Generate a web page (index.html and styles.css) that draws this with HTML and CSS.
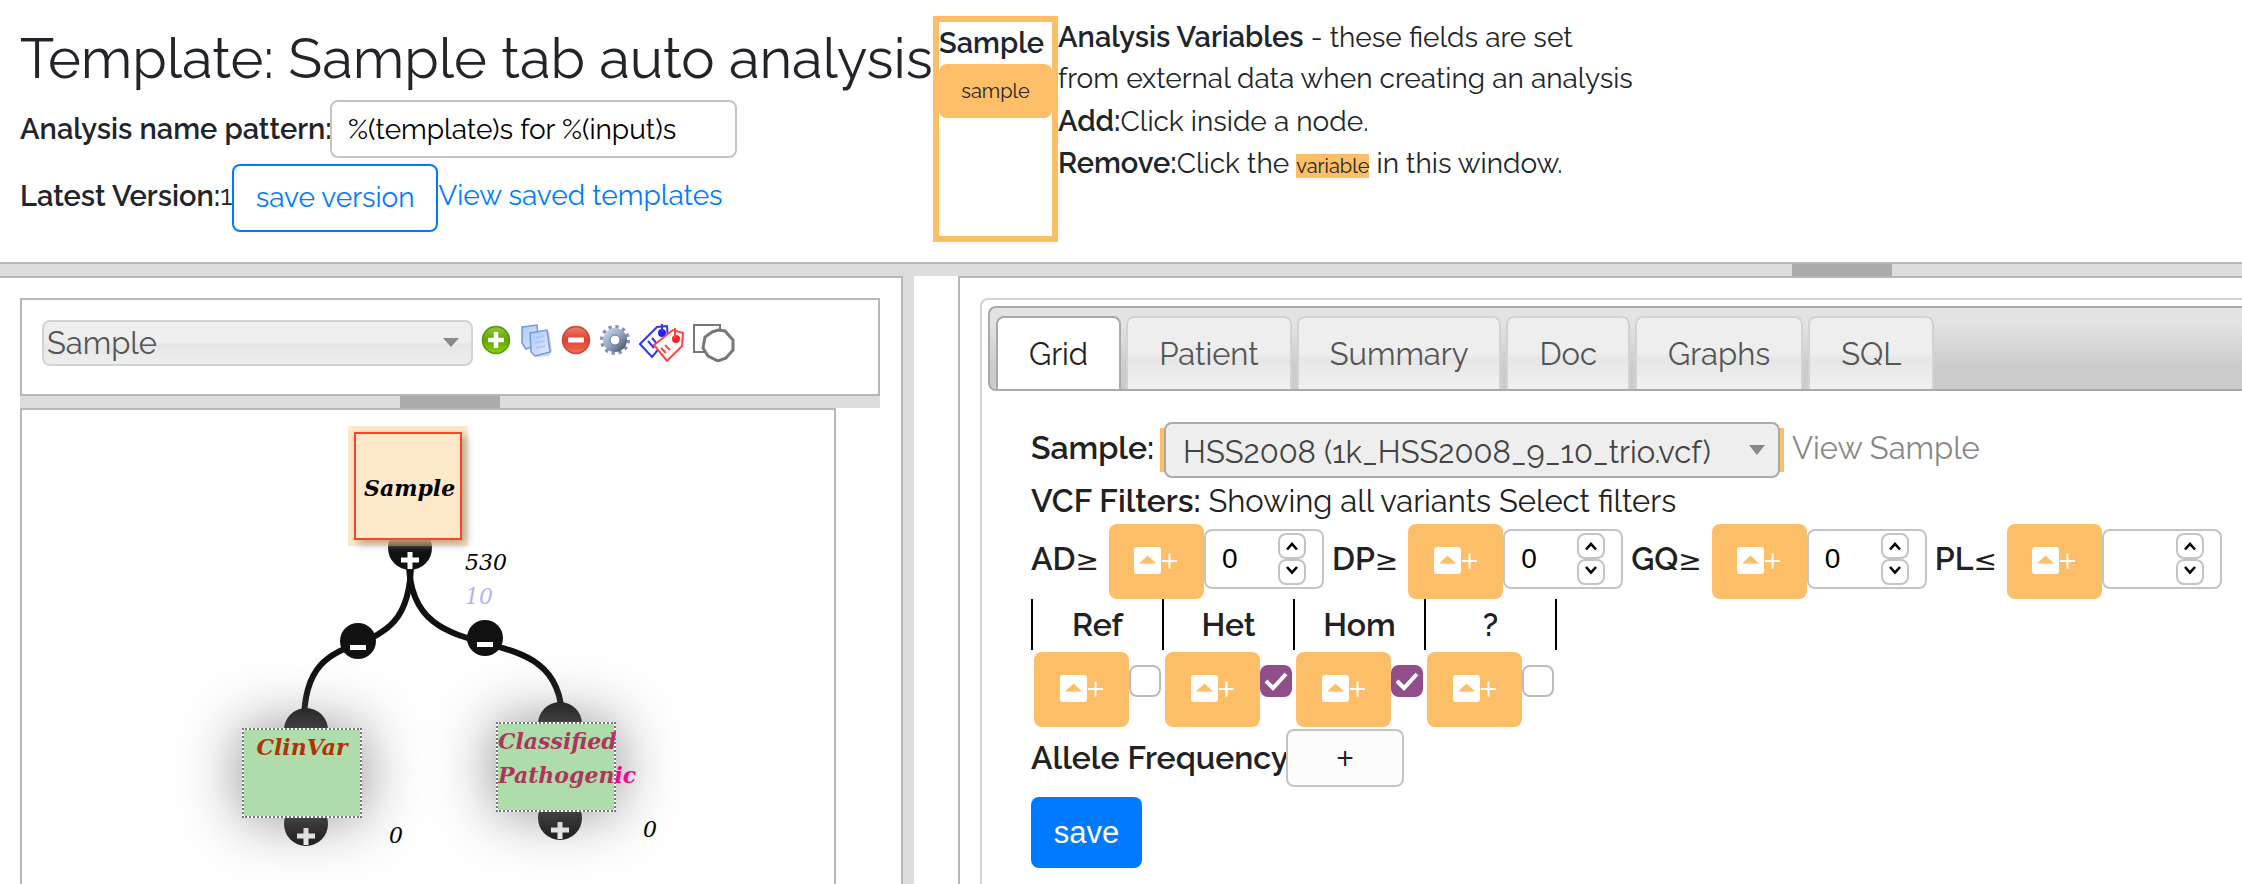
FILE: index.html
```html
<!DOCTYPE html>
<html lang="en">
<head>
<meta charset="utf-8">
<title>Template: Sample tab auto analysis</title>
<link rel="stylesheet" href="styles.css">
</head>
<body>
<svg class="defs" aria-hidden="true">
  <defs>
    <linearGradient id="green" x1="0" y1="0" x2="0" y2="1"><stop offset="0" stop-color="#8fc63a"/><stop offset=".5" stop-color="#5ea800"/><stop offset="1" stop-color="#8bd000"/></linearGradient>
    <linearGradient id="red" x1="0" y1="0" x2="0" y2="1"><stop offset="0" stop-color="#ee7a6a"/><stop offset=".5" stop-color="#e23f2d"/><stop offset="1" stop-color="#f4705c"/></linearGradient>
    <linearGradient id="steel" x1="0" y1="0" x2="1" y2="1"><stop offset="0" stop-color="#c4d0e2"/><stop offset=".5" stop-color="#93a5c0"/><stop offset="1" stop-color="#4f617c"/></linearGradient>
    <linearGradient id="page" x1="0" y1="0" x2="1" y2="1"><stop offset="0" stop-color="#a9c6f7"/><stop offset="1" stop-color="#e4eeff"/></linearGradient>
    <symbol id="insert" viewBox="0 0 44 28"><rect x="0" y="0" width="27" height="27" rx="3" fill="#fff"/><path d="M5 16.500l8.500-8 8.500 8z" fill="#fcbe67"/><path d="M28 14h15M35.500 6.500v15" stroke="#fff" stroke-width="2"/></symbol>
    <symbol id="up" viewBox="0 0 28 26"><path d="M9 16.500l5-5.500 5 5.500" fill="none" stroke="#000" stroke-width="2.600"/></symbol>
    <symbol id="down" viewBox="0 0 28 26"><path d="M9 8l5 5.500L19 8" fill="none" stroke="#000" stroke-width="2.600"/></symbol>
  </defs>
</svg>

<header class="top">
  <section class="template">
    <h1>Template: Sample tab auto analysis</h1>
    <div class="row name-row"><label for="pattern">Analysis name pattern:</label><input id="pattern" class="text-input" type="text" value="%(template)s for %(input)s"></div>
    <div class="row version-row"><strong>Latest Version:</strong><span class="version">1</span><button class="save-version" type="button">save version</button><a href="#">View saved templates</a></div>
  </section>
  <section class="variables">
    <strong>Sample</strong>
    <button class="variable-button" type="button">sample</button>
  </section>
  <section class="help">
    <div><strong>Analysis Variables</strong> - these fields are set</div>
    <div>from external data when creating an analysis</div>
    <div><strong>Add:</strong>Click inside a node.</div>
    <div><strong>Remove:</strong>Click the <span class="variable">variable</span> in this window.</div>
  </section>
</header>
<div class="splitter main-splitter"><span class="handle"></span></div>

<main class="work">
  <section class="left">
    <div class="toolbar">
      <select class="node-type" aria-label="Node type"><option>Sample</option></select>
      <button class="tool" type="button" aria-label="Add node"><svg width="30" height="32" viewBox="0 0 30 32"><circle cx="15" cy="16" r="13.500" fill="url(#green)" stroke="#5a9410" stroke-width="1.500"/><path d="M15 8v16M7 16h16" stroke="#fff" stroke-width="4.500"/></svg></button>
      <button class="tool" type="button" aria-label="Copy nodes"><svg width="34" height="34" viewBox="0 0 34 34"><path d="M3 3l15-2 2 19-13 5-4-6z" fill="url(#page)" stroke="#7396dc" stroke-width="1.500"/><path d="M13 10l17-3 3 20-3 5-13 1z" fill="#aab" opacity=".5"/><path d="M11 9l17-3 3 22-15 4-4-4z" fill="url(#page)" stroke="#7396dc" stroke-width="1.500"/><path d="M16 14l9-2M16 19l10-2M17 24l9-2" stroke="#a9c4f4" stroke-width="1.500"/></svg></button>
      <button class="tool" type="button" aria-label="Delete nodes"><svg width="30" height="32" viewBox="0 0 30 32"><circle cx="15" cy="16" r="13.500" fill="url(#red)" stroke="#c5463a" stroke-width="1.500"/><path d="M7 16h16" stroke="#fff" stroke-width="5"/></svg></button>
      <button class="tool" type="button" aria-label="Settings"><svg width="32" height="32" viewBox="0 0 32 32"><circle cx="16" cy="16" r="13" fill="none" stroke="#8291aa" stroke-width="4" stroke-dasharray="3.200 3.600"/><circle cx="16" cy="16" r="8.500" fill="none" stroke="url(#steel)" stroke-width="7"/><circle cx="16" cy="16" r="5" fill="#fff" stroke="#60708a"/></svg></button>
      <button class="tool" type="button" aria-label="Tags"><svg width="46" height="38" viewBox="0 0 46 38"><g fill="#fff" stroke-width="2"><path d="M1 20L18 3l10-1 1 12-16 19z" stroke="#33f"/><circle cx="23" cy="9" r="3" fill="#22e" stroke="#22e"/><path d="M23 8V0M9 17l6 7M13 14l6 7" stroke="#33f"/><path d="M15 21L34 6l10 3-1 13-15 15z" stroke="#f44"/><circle cx="37" cy="15" r="3" fill="#f22" stroke="#f22"/><path d="M36 14V4M22 24l5 5M26 21l5 5" stroke="#f44"/></g></svg></button>
      <button class="tool" type="button" aria-label="Shapes"><svg width="42" height="38" viewBox="0 0 42 38"><path d="M1 1h26v27H1z" fill="#fff" stroke="#777" stroke-width="2"/><path d="M19 8l6-2 7 1 8 9v10l-7 8-8 3-10-5-5-8 2-11z" fill="#fff" stroke="#777" stroke-width="3"/></svg></button>
    </div>
    <div class="splitter"><span class="handle"></span></div>
    <div class="canvas">
      <svg class="edges" width="800" height="474" viewBox="0 0 800 474" aria-hidden="true">
        <g fill="none" stroke="#111" stroke-width="6">
          <path d="M389 152C389 272 282 196 282 312"/>
          <path d="M387 152C387 272 540 196 540 310"/>
        </g>
        <g fill="#111"><circle cx="388" cy="138" r="22"/><circle cx="336" cy="231" r="18"/><circle cx="463" cy="228" r="18"/><circle cx="284" cy="320" r="22"/><circle cx="284" cy="414" r="22"/><circle cx="538" cy="314" r="22"/><circle cx="538" cy="408" r="22"/></g>
        <g stroke="#fff" stroke-width="5"><path d="M379 150h18M388 142v17M328 237.500h16M455 234.500h16M275 426h18M284 418v17M529 420h18M538 412v17"/></g>
      </svg>
      <div class="node sample-node"><span class="node-name">Sample</span></div>
      <div class="node clinvar-node"><span class="node-name">ClinVar</span></div>
      <div class="node classified-node"><span class="node-name">Classified<br>Pathogenic</span></div>
      <span class="count sample-count">530<br><span class="count-sub">10</span></span>
      <span class="count clinvar-count">0</span>
      <span class="count classified-count">0</span>
    </div>
  </section>
  <div class="side-splitter"></div>
  <section class="right">
    <div class="tabs">
      <nav class="tab-bar">
        <a class="tab active" href="#">Grid</a><a class="tab" href="#">Patient</a><a class="tab" href="#">Summary</a><a class="tab" href="#">Doc</a><a class="tab" href="#">Graphs</a><a class="tab" href="#">SQL</a>
      </nav>
      <form class="editor">
        <div class="row sample-row"><label for="sample">Sample:</label><span class="select-wrap"><select id="sample" class="sample-select"><option>HSS2008 (1k_HSS2008_9_10_trio.vcf)</option></select></span><a class="view-sample" href="#">View Sample</a></div>
        <div class="vcf-row"><strong>VCF Filters:</strong> Showing all variants Select filters</div>
        <div class="filters">
          <div class="filter"><label for="ad">AD<span class="sign">≥</span></label><button class="insert" type="button" aria-label="Insert AD"><svg width="44" height="28"><use href="#insert"/></svg></button><span class="spinner"><input id="ad" type="text" value="0"><span class="spin"><button type="button" aria-label="Increase AD"><svg width="24" height="22" viewBox="2 2 24 22"><use href="#up" width="28" height="26"/></svg></button><button type="button" aria-label="Decrease AD"><svg width="24" height="22" viewBox="2 2 24 22"><use href="#down" width="28" height="26"/></svg></button></span></span></div>
          <div class="filter"><label for="dp">DP<span class="sign">≥</span></label><button class="insert" type="button" aria-label="Insert DP"><svg width="44" height="28"><use href="#insert"/></svg></button><span class="spinner"><input id="dp" type="text" value="0"><span class="spin"><button type="button" aria-label="Increase DP"><svg width="24" height="22" viewBox="2 2 24 22"><use href="#up" width="28" height="26"/></svg></button><button type="button" aria-label="Decrease DP"><svg width="24" height="22" viewBox="2 2 24 22"><use href="#down" width="28" height="26"/></svg></button></span></span></div>
          <div class="filter"><label for="gq">GQ<span class="sign">≥</span></label><button class="insert" type="button" aria-label="Insert GQ"><svg width="44" height="28"><use href="#insert"/></svg></button><span class="spinner"><input id="gq" type="text" value="0"><span class="spin"><button type="button" aria-label="Increase GQ"><svg width="24" height="22" viewBox="2 2 24 22"><use href="#up" width="28" height="26"/></svg></button><button type="button" aria-label="Decrease GQ"><svg width="24" height="22" viewBox="2 2 24 22"><use href="#down" width="28" height="26"/></svg></button></span></span></div>
          <div class="filter"><label for="pl">PL<span class="sign">≤</span></label><button class="insert" type="button" aria-label="Insert PL"><svg width="44" height="28"><use href="#insert"/></svg></button><span class="spinner"><input id="pl" type="text" value=""><span class="spin"><button type="button" aria-label="Increase PL"><svg width="24" height="22" viewBox="2 2 24 22"><use href="#up" width="28" height="26"/></svg></button><button type="button" aria-label="Decrease PL"><svg width="24" height="22" viewBox="2 2 24 22"><use href="#down" width="28" height="26"/></svg></button></span></span></div>
        </div>
        <table class="zygosity">
          <thead><tr><th id="ref">Ref</th><th id="het">Het</th><th id="hom">Hom</th><th id="unk">?</th></tr></thead>
          <tbody><tr>
            <td><div class="cell"><button class="insert" type="button" aria-label="Insert Ref"><svg width="44" height="28"><use href="#insert"/></svg></button><input type="checkbox" aria-labelledby="ref"></div></td>
            <td><div class="cell"><button class="insert" type="button" aria-label="Insert Het"><svg width="44" height="28"><use href="#insert"/></svg></button><input type="checkbox" aria-labelledby="het" checked></div></td>
            <td><div class="cell"><button class="insert" type="button" aria-label="Insert Hom"><svg width="44" height="28"><use href="#insert"/></svg></button><input type="checkbox" aria-labelledby="hom" checked></div></td>
            <td><div class="cell"><button class="insert" type="button" aria-label="Insert unknown"><svg width="44" height="28"><use href="#insert"/></svg></button><input type="checkbox" aria-labelledby="unk"></div></td>
          </tr></tbody>
        </table>
        <div class="row allele-row"><strong>Allele Frequency</strong><button class="add" type="button">+</button></div>
        <button class="save" type="button">save</button>
      </form>
    </div>
  </section>
</main>
</body>
</html>
```
FILE: styles.css
```css
* { box-sizing: border-box; }
body {
  margin: 0;
  min-height: 100vh;
  display: flex;
  flex-direction: column;
  overflow: hidden;
  background: #fff;
  color: #212529;
  font: 400 28px/42px Raleway, Lato, sans-serif;
}
button, input, select { font: inherit; margin: 0; }
a { color: #007bff; text-decoration: none; white-space: nowrap; }
strong, label { font-size: 29px; font-weight: 600; white-space: nowrap; }
.defs { position: absolute; width: 0; height: 0; }
.row { display: flex; align-items: center; }

.top { display: flex; align-items: flex-start; height: 262px; padding: 16px 20px 0; white-space: nowrap; }
.template { width: 913px; }
h1 { margin: 8px 0 0; font-size: 56px; font-weight: 400; line-height: 68px; }
.name-row { margin-top: 8px; }
.name-row label { width: 310px; }
.text-input {
  width: 407px; height: 58px; padding: 0 16px;
  border: 2px solid #c4c4c4; border-radius: 8px; background: #fff; color: #000;
}
.version-row { margin-top: 6px; }
.version-row strong, .version-row .version, .version-row a { padding-bottom: 4px; }
.save-version {
  width: 206px; height: 68px; padding: 0;
  border: 2px solid #007bff; border-radius: 8px; background: #fff; color: #007bff;
}
.variables { width: 125px; height: 226px; border: 6px solid #fcbe67; display: flex; flex-direction: column; }
.variable-button {
  height: 54px; border: 0; border-radius: 8px; background: #fcbe67; color: #212529; font-size: 20px;
}
.help div { height: 42px; }
.variable { background: #fcbe67; font-size: 20px; }

.splitter { background: #ddd; display: flex; justify-content: center; height: 12px; }
.handle { width: 100px; height: 12px; background: #aaa; }
.main-splitter { height: 14px; border-top: 2px solid #b8b8b8; justify-content: flex-end; padding-right: 350px; }

.work { flex: 1; display: flex; min-width: 0; }
.left {
  width: 903px; padding: 20px 21px 0 20px;
  border: 2px solid #b8b8b8; border-width: 2px 2px 0 0;
  display: flex; flex-direction: column;
}
.side-splitter { width: 11px; background: #ddd; }
.toolbar {
  display: flex; align-items: flex-start; height: 98px; padding: 20px;
  border: 2px solid #b8b8b8;
}
.node-type {
  appearance: none; width: 431px; height: 46px; padding: 0 3px; margin-right: 4px;
  border: 2px solid #d3d3d3; border-radius: 8px; color: #555; font-size: 31px; line-height: 40px;
  background: url("data:image/svg+xml,%3Csvg xmlns='http://www.w3.org/2000/svg' width='16' height='9'%3E%3Cpath d='M0 0h16l-8 9z' fill='%23888'/%3E%3C/svg%3E") no-repeat right 12px top 16px,
    linear-gradient(#eee 50%, #e6e6e6 52%, #eee);
}
.tool { border: 0; padding: 4px 4px 0 4px; background: none; display: flex; }
.canvas {
  position: relative; flex: 1; width: 816px;
  border: 2px solid #b8b8b8; border-bottom: 0;
  font-family: "DejaVu Serif", serif; font-style: italic; font-size: 22px; line-height: 34px;
}
.edges { position: absolute; left: 0; top: 0; }
.node { position: absolute; background: #fff; font-weight: 700; }
.node::after { content: ""; position: absolute; inset: 0; }
.node-name { white-space: nowrap; }
.sample-node {
  left: 332px; top: 22px; width: 108px; height: 108px;
  border: 2px solid #f00; box-shadow: 4px 4px 8px #999; color: #000;
}
.sample-node::after { inset: -8px; background: rgba(252, 190, 103, .35); }
.sample-node .node-name { position: relative; z-index: 1; display: block; padding: 37px 0 0 8px; }
.clinvar-node, .classified-node { width: 120px; height: 90px; box-shadow: 0 0 60px rgba(128, 128, 128, .9); }
.clinvar-node { left: 220px; top: 318px; text-align: center; color: #f00; }
.classified-node { left: 474px; top: 312px; color: #ff008c; }
.clinvar-node .node-name, .classified-node .node-name { display: block; padding: 2px; }
.clinvar-node::after, .classified-node::after {
  border: 2px dotted #777; background: rgba(20, 154, 9, .345); background-clip: padding-box;
}
.count { position: absolute; color: #000; }
.count-sub { color: #b3b0ff; }
.sample-count { left: 443px; top: 136px; }
.clinvar-count { left: 367px; top: 409px; }
.classified-count { left: 621px; top: 403px; }

.right {
  flex: 1; min-width: 0; margin-left: 44px; padding: 20px 0 0 20px;
  border: 2px solid #b8b8b8; border-width: 2px 0 0 2px; color: #212121; font-size: 31px;
}
.right strong, .right label { font-size: 32px; }
.tabs { height: 100%; border: 2px solid #d3d3d3; border-width: 2px 0 0 2px; border-radius: 8px 0 0 0; padding: 6px 0 0 6px; }
.tab-bar {
  display: flex; gap: 5px; height: 85px; padding: 8px 0 0 6px;
  border: 2px solid #aaa; border-right: 0; border-radius: 8px 0 0 8px;
  background: linear-gradient(#e3e3e3 20%, #ccc 70%);
}
.tab {
  height: 73px; padding: 15px 31px 0; color: #555;
  border: 2px solid #d3d3d3; border-bottom: 0; border-radius: 8px 8px 0 0;
  background: linear-gradient(#eee 50%, #e6e6e6 58%, #f1f1f1);
}
.tab.active { background: #fff; border-color: #aaa; color: #212121; }
.editor { padding: 31px 0 0 43px; }
.sample-row label { width: 121px; padding-bottom: 4px; }
.select-wrap { width: 624px; height: 44px; margin: 3px 8px; background: #fcbe67; display: flex; align-items: center; justify-content: center; }
.sample-select {
  appearance: none; width: 616px; height: 56px; padding: 4px 17px 0;
  border: 2px solid #aaa; border-radius: 8px; color: #444; flex: none;
  background: #eee url("data:image/svg+xml,%3Csvg xmlns='http://www.w3.org/2000/svg' width='16' height='10'%3E%3Cpath d='M0 0h16l-8 10z' fill='%23888'/%3E%3C/svg%3E") no-repeat right 13px center;
}
.sample-row { height: 56px; }
.view-sample { padding-bottom: 4px; color: #888; }
.vcf-row { height: 46px; line-height: 46px; }
.filters { display: flex; gap: 8px; }
.filter { display: flex; align-items: flex-start; }
.filter label { padding: 14px 10px 0 0; flex: none; }
.sign { font: 28px/42px "DejaVu Sans", sans-serif; }
.insert {
  width: 95px; height: 75px; padding: 0 0 2px; flex: none;
  border: 0; border-radius: 8px; background: #fcbe67;
  display: flex; align-items: center; justify-content: center;
}
.spinner {
  display: flex; justify-content: space-between; width: 120px; height: 60px; margin-top: 5px; padding: 2px 16px;
  border: 2px solid #c4c4c4; border-radius: 8px;
}
.spinner input { width: 50px; border: 0; padding: 0; background: none; color: #000; font: 28px "Liberation Sans", sans-serif; }
.spin { display: flex; flex-direction: column; }
.spin button {
  width: 28px; height: 26px; padding: 0; display: flex;
  border: 2px solid #c4c4c4; border-radius: 8px; background: #fff;
}
.zygosity { border-collapse: collapse; table-layout: fixed; width: 526px; }
.zygosity th { height: 51px; padding: 0; border: 2px solid #000; border-width: 0 2px; font-weight: 600; font-size: 32px; }
.zygosity td { padding: 2px 0 0; }
.cell { display: flex; padding-left: 2px; }
.cell input {
  appearance: none; width: 32px; height: 32px; margin-top: 13px; flex: none;
  border: 2px solid #bbb; border-radius: 8px; background: #fff;
}
.cell input:checked {
  border-color: #924d8b;
  background: #924d8b url("data:image/svg+xml,%3Csvg xmlns='http://www.w3.org/2000/svg' width='28' height='28'%3E%3Cpath d='M4 14l7 7L24 7' fill='none' stroke='%23fff' stroke-width='4'/%3E%3C/svg%3E") center no-repeat;
}
.allele-row { margin-top: 2px; }
.allele-row strong { width: 255px; }
.add { width: 118px; height: 58px; padding: 0; border: 2px solid #c4c4c4; border-radius: 8px; background: #fcfcfc; color: #212121; font-family: "Open Sans", sans-serif; }
.save {
  display: block; margin-top: 10px; width: 111px; height: 71px; padding: 0;
  border: 0; border-radius: 8px; background: #007bff; color: #fff; font-family: "Liberation Sans", sans-serif;
}
```
